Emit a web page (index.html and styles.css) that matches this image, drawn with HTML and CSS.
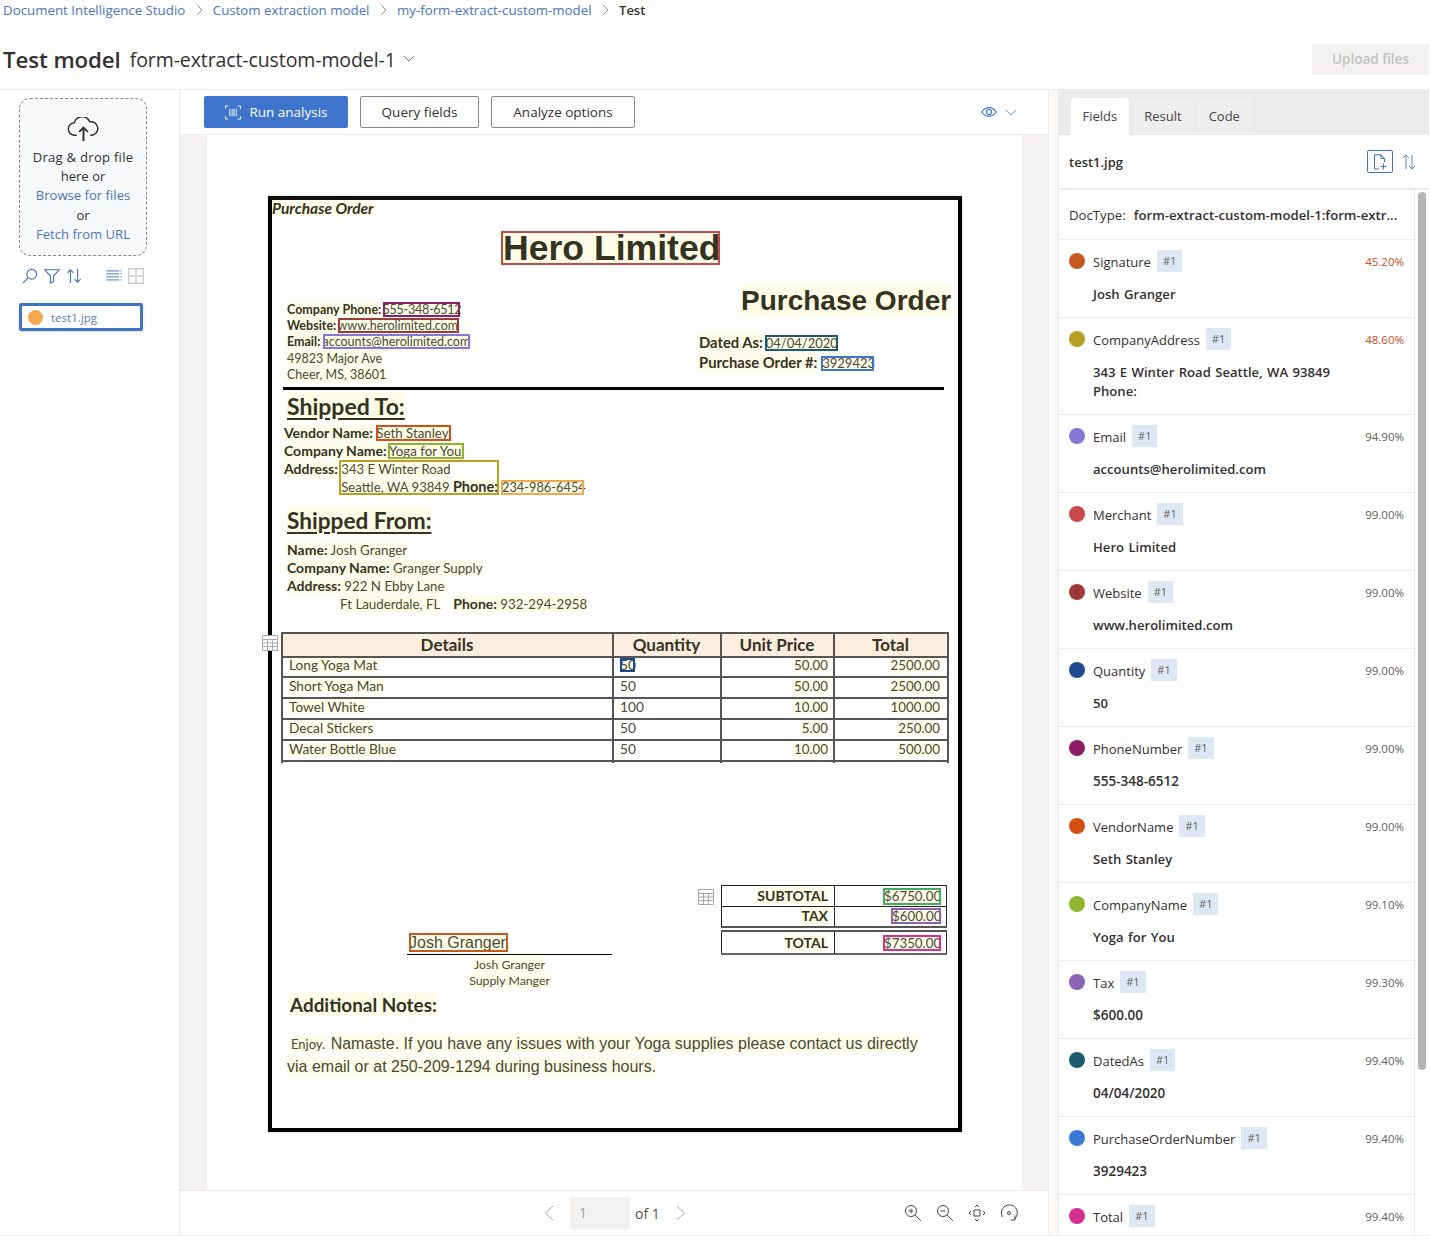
FILE: index.html
```html
<!DOCTYPE html>
<html lang="en">
<head>
  <meta charset="UTF-8">
  <title>Test model</title>
  <link rel="stylesheet" href="styles.css">
</head>
<body>
  <nav class="crumbs">
    <a>Document Intelligence Studio</a>
    <svg class="crumb-sep" viewBox="0 0 8 14"><path d="M1 1l6 6-6 6"/></svg>
    <a>Custom extraction model</a>
    <svg class="crumb-sep" viewBox="0 0 8 14"><path d="M1 1l6 6-6 6"/></svg>
    <a>my-form-extract-custom-model</a>
    <svg class="crumb-sep" viewBox="0 0 8 14"><path d="M1 1l6 6-6 6"/></svg>
    <span class="crumb-now">Test</span>
  </nav>

  <header class="title-row">
    <h1>Test model</h1>
    <span class="model-name">form-extract-custom-model-1</span>
    <svg class="title-chevron" viewBox="0 0 14 8"><path d="M1 1l6 6 6-6"/></svg>
    <button class="btn-upload">Upload files</button>
  </header>

  <main class="workspace">
    <aside class="sidebar">
      <div class="dropzone">
        <svg class="cloud" viewBox="0 0 34 26"><path d="M10 19H8a6.5 6.5 0 0 1-.6-13A8.5 8.5 0 0 1 23.5 5a7 7 0 0 1 2.5 14h-2"/><path class="cloud-arrow" d="M17 25V11M12.500 15.500L17 11l4.500 4.500"/></svg>
        <p class="drop-first">Drag &amp; drop file</p>
        <p>here or</p>
        <p><a>Browse for files</a></p>
        <p>or</p>
        <p><a>Fetch from URL</a></p>
      </div>
      <div class="side-tools">
        <svg class="tool" viewBox="0 0 18 18"><circle cx="11" cy="7" r="5.500"/><path d="M7 11l-6 6"/></svg>
        <svg class="tool" viewBox="0 0 18 18"><path d="M1 2h16l-6.200 7v6l-3.600 2V9z"/></svg>
        <svg class="tool" viewBox="0 0 18 18"><path d="M5 17V2M1.500 5.500L5 2l3.500 3.500M13 1v15M9.500 12.500L13 16l3.500-3.500"/></svg>
        <svg class="tool tool-list" viewBox="0 0 18 14"><path d="M0 1h15M0 4.500h15M0 8h15M0 11.500h15M16.500 1h1.500M16.500 4.500h1.500M16.500 8h1.500M16.500 11.500h1.500"/></svg>
        <svg class="tool tool-grid" viewBox="0 0 16 16"><path d="M.75.75h14.500v14.500H.75zM8 .75v14.500M.75 8h14.500"/></svg>
      </div>
      <div class="file-card"><span class="file-dot"></span>test1.jpg</div>
    </aside>

    <section class="viewer">
      <div class="toolbar">
        <button class="btn btn-run">
          <svg class="scan" viewBox="0 0 18 16"><path d="M1 4V1h3M14 1h3v3M17 12v3h-3M4 15H1v-3M5.500 4v8M8 4v8M10 4v8M12.500 4v8"/></svg>
          Run analysis
        </button>
        <button class="btn">Query fields</button>
        <button class="btn">Analyze options</button>
        <svg class="eye" viewBox="0 0 16 10"><path d="M.7 5C3 1.800 5.400.7 8 .7s5 1.100 7.300 4.300C13 8.200 10.600 9.300 8 9.300S3 8.200.7 5z"/><circle cx="8" cy="5" r="2.500"/></svg>
        <svg class="eye-chevron" viewBox="0 0 14 8"><path d="M1 1l6 6 6-6"/></svg>
      </div>

      <div class="canvas">
        <div class="paper">
          <article class="doc">
            <p class="doc-kicker"><mark>Purchase Order</mark></p>
            <h2 class="doc-name"><mark class="box b-merchant">Hero Limited</mark></h2>

            <div class="doc-head">
              <div class="doc-contact">
                <p><mark><b>Company Phone:</b></mark> <mark class="box b-phone">555-348-6512</mark></p>
                <p><mark><b>Website:</b></mark> <mark class="box b-site">www.herolimited.com</mark></p>
                <p><mark><b>Email:</b></mark> <mark class="box b-mail">accounts@herolimited.com</mark></p>
                <p><mark>49823 Major Ave</mark></p>
                <p><mark>Cheer, MS, 38601</mark></p>
              </div>
              <div class="doc-order">
                <h3><mark>Purchase Order</mark></h3>
                <p><mark><b>Dated As:</b></mark> <mark class="box b-date">04/04/2020</mark></p>
                <p><mark><b>Purchase Order #:</b></mark> <mark class="box b-po">3929423</mark></p>
              </div>
            </div>
            <div class="doc-rule"></div>

            <div class="doc-block doc-to">
              <h3><mark>Shipped To:</mark></h3>
              <p><mark><b>Vendor Name:</b></mark> <mark class="box b-vendor">Seth Stanley</mark></p>
              <p><mark><b>Company Name:</b></mark> <mark class="box b-company">Yoga for You</mark></p>
              <p class="address-line"><mark><b>Address:</b></mark> <span class="box b-address"><mark>343 E Winter Road</mark><br><mark>Seattle, WA 93849</mark> <mark><b>Phone:</b></mark></span></p>
              <p class="phone-line"><mark class="box b-phone2">234-986-6454</mark></p>
            </div>

            <div class="doc-block doc-from">
              <h3><mark>Shipped From:</mark></h3>
              <p><mark><b>Name:</b> Josh Granger</mark></p>
              <p><mark><b>Company Name:</b> Granger Supply</mark></p>
              <p><mark><b>Address:</b> 922 N Ebby Lane</mark></p>
              <p class="from-city"><mark>Ft Lauderdale, FL</mark> <mark class="from-phone"><b>Phone:</b> 932-294-2958</mark></p>
            </div>

            <div class="items-wrap">
              <svg class="table-mark mark-items" viewBox="0 0 16 16"><path d="M.5.500h15v15H.5zM.5 4.500h15M.5 8h15M.5 11.500h15M5.500 4.500v11M10.500 4.500v11"/></svg>
              <table class="items">
                <colgroup><col class="c-details"><col class="c-qty"><col class="c-price"><col class="c-total"></colgroup>
                <thead>
                  <tr><th>Details</th><th>Quantity</th><th>Unit Price</th><th>Total</th></tr>
                </thead>
                <tbody>
                  <tr class="first"><td><mark>Long Yoga Mat</mark></td><td><mark class="box b-qty">50</mark></td><td class="num"><mark>50.00</mark></td><td class="num"><mark>2500.00</mark></td></tr>
                  <tr><td><mark>Short Yoga Man</mark></td><td>50</td><td class="num"><mark>50.00</mark></td><td class="num"><mark>2500.00</mark></td></tr>
                  <tr><td><mark>Towel White</mark></td><td>100</td><td class="num"><mark>10.00</mark></td><td class="num"><mark>1000.00</mark></td></tr>
                  <tr><td><mark>Decal Stickers</mark></td><td>50</td><td class="num"><mark>5.00</mark></td><td class="num"><mark>250.00</mark></td></tr>
                  <tr><td><mark>Water Bottle Blue</mark></td><td>50</td><td class="num"><mark>10.00</mark></td><td class="num"><mark>500.00</mark></td></tr>
                  <tr class="tail"><td></td><td></td><td></td><td></td></tr>
                </tbody>
              </table>
            </div>

            <div class="doc-sign">
              <div class="signature">
                <div class="sign-line"><mark class="box b-sign">Josh Granger</mark></div>
                <p><mark>Josh Granger</mark></p>
                <p><mark>Supply Manger</mark></p>
              </div>
              <div class="totals-wrap">
                <svg class="table-mark mark-totals" viewBox="0 0 16 16"><path d="M.5.500h15v15H.5zM.5 4.500h15M.5 8h15M.5 11.500h15M5.500 4.500v11M10.500 4.500v11"/></svg>
                <table class="totals">
                  <tr><th><mark>SUBTOTAL</mark></th><td><mark class="box b-sub">$6750.00</mark></td></tr>
                  <tr><th><mark>TAX</mark></th><td><mark class="box b-tax">$600.00</mark></td></tr>
                  <tr class="grand"><th><mark>TOTAL</mark></th><td><mark class="box b-grand">$7350.00</mark></td></tr>
                </table>
              </div>
            </div>

            <h3 class="doc-notes-title"><mark>Additional Notes:</mark></h3>
            <p class="doc-notes"><mark class="enjoy">Enjoy.</mark> <mark>Namaste. If you have any issues with your Yoga supplies please contact us directly</mark></p>
            <p class="doc-notes doc-notes-2"><mark>via email or at 250-209-1294 during business hours.</mark></p>
          </article>
        </div>
      </div>

      <div class="pager">
        <svg class="pager-arrow" viewBox="0 0 10 16"><path d="M9 1L1.500 8 9 15"/></svg>
        <span class="page-input">1</span>
        <span class="page-of">of 1</span>
        <svg class="pager-arrow" viewBox="0 0 10 16"><path d="M1 1l7.500 7L1 15"/></svg>
        <div class="zoom-tools">
          <svg viewBox="0 0 18 18"><circle cx="7" cy="7" r="5.500"/><path d="M11 11l6 6M4.500 7h5M7 4.500v5"/></svg>
          <svg viewBox="0 0 18 18"><circle cx="7" cy="7" r="5.500"/><path d="M11 11l6 6M4.500 7h5"/></svg>
          <svg viewBox="0 0 18 18"><path d="M6 6h6v6H6zM7 3l2-2 2 2M7 15l2 2 2-2M3 7L1 9l2 2M15 7l2 2-2 2"/></svg>
          <svg viewBox="0 0 18 18"><path d="M2.500 13A8 8 0 1 1 14.500 15M15 11.500V16h-4.500"/><circle cx="9" cy="9" r="1.500"/></svg>
        </div>
      </div>
    </section>

    <div class="splitter"></div>

    <section class="panel">
      <div class="tabs">
        <span class="tab tab-on">Fields</span>
        <span class="tab">Result</span>
        <span class="tab">Code</span>
      </div>
      <div class="panel-head">
        <span class="panel-file">test1.jpg</span>
        <span class="add-doc">
          <svg viewBox="0 0 14 16"><path d="M6 15H1.500V.75H8L11.500 4.500V8M8 .75V4.500h3.500M10.500 9.500v6M7.500 12.500h6"/></svg>
        </span>
        <svg class="panel-sort" viewBox="0 0 14 16"><path d="M4 15V1M1 4l3-3 3 3M10 1v14M7 12l3 3 3-3"/></svg>
      </div>
      <div class="panel-body">
        <div class="field-list">
          <div class="doctype"><span>DocType:</span><b>form-extract-custom-model-1:form-extr...</b></div>

          <div class="field">
            <div class="field-top"><i class="dot d-sign"></i><span>Signature</span><em>#1</em><small class="low">45.20%</small></div>
            <p>Josh Granger</p>
          </div>
          <div class="field">
            <div class="field-top"><i class="dot d-address"></i><span>CompanyAddress</span><em>#1</em><small class="low">48.60%</small></div>
            <p>343 E Winter Road Seattle, WA 93849<br>Phone:</p>
          </div>
          <div class="field">
            <div class="field-top"><i class="dot d-mail"></i><span>Email</span><em>#1</em><small>94.90%</small></div>
            <p>accounts@herolimited.com</p>
          </div>
          <div class="field">
            <div class="field-top"><i class="dot d-merchant"></i><span>Merchant</span><em>#1</em><small>99.00%</small></div>
            <p>Hero Limited</p>
          </div>
          <div class="field">
            <div class="field-top"><i class="dot d-site"></i><span>Website</span><em>#1</em><small>99.00%</small></div>
            <p>www.herolimited.com</p>
          </div>
          <div class="field">
            <div class="field-top"><i class="dot d-qty"></i><span>Quantity</span><em>#1</em><small>99.00%</small></div>
            <p>50</p>
          </div>
          <div class="field">
            <div class="field-top"><i class="dot d-phone"></i><span>PhoneNumber</span><em>#1</em><small>99.00%</small></div>
            <p class="digits">555-348-6512</p>
          </div>
          <div class="field">
            <div class="field-top"><i class="dot d-vendor"></i><span>VendorName</span><em>#1</em><small>99.00%</small></div>
            <p>Seth Stanley</p>
          </div>
          <div class="field">
            <div class="field-top"><i class="dot d-company"></i><span>CompanyName</span><em>#1</em><small>99.10%</small></div>
            <p>Yoga for You</p>
          </div>
          <div class="field">
            <div class="field-top"><i class="dot d-tax"></i><span>Tax</span><em>#1</em><small>99.30%</small></div>
            <p class="digits">$600.00</p>
          </div>
          <div class="field">
            <div class="field-top"><i class="dot d-date"></i><span>DatedAs</span><em>#1</em><small>99.40%</small></div>
            <p class="digits">04/04/2020</p>
          </div>
          <div class="field">
            <div class="field-top"><i class="dot d-po"></i><span>PurchaseOrderNumber</span><em>#1</em><small>99.40%</small></div>
            <p class="digits">3929423</p>
          </div>
          <div class="field">
            <div class="field-top"><i class="dot d-total"></i><span>Total</span><em>#1</em><small>99.40%</small></div>
          </div>
        </div>
        <div class="scroll-track"><div class="scroll-thumb"></div></div>
      </div>
    </section>
  </main>
</body>
</html>
```

FILE: styles.css
```css
* {
  box-sizing: border-box;
}

html, body {
  margin: 0;
  padding: 0;
  height: 1246px;
  overflow: hidden;
  background-color: #fff;
  color: #323130;
  font-family: "Open Sans", "Noto Sans", sans-serif;
}

p, h1, h2, h3 {
  margin: 0;
}

button {
  font-family: inherit;
}

svg {
  display: block;
  flex: none;
  fill: none;
  stroke: currentColor;
}

/* breadcrumb + title */
.crumbs {
  display: flex;
  align-items: center;
  height: 20px;
  padding-left: 3px;
  font-size: 13.300px;
  color: #4a76b8;
}

.crumb-sep {
  width: 7px;
  height: 12px;
  margin: 0 10px 0 10.500px;
  color: #7a7a7a;
}

.crumb-now {
  color: #323130;
  font-weight: 600;
  font-size: 13px;
}

.title-row {
  display: flex;
  align-items: center;
  height: 69px;
  padding: 9px 1px 0 3px;
}

.title-row h1 {
  font-size: 22.300px;
  font-weight: 600;
  letter-spacing: -0.1px;
  margin-right: 9px;
}

.model-name {
  font-size: 19.500px;
  letter-spacing: -0.1px;
}

.title-chevron {
  width: 12px;
  height: 7px;
  margin: -2px 0 0 7px;
  color: #605e5c;
}

.btn-upload {
  margin: 0 0 0 auto;
  width: 117px;
  height: 31px;
  border: 0;
  background: #f3f2f1;
  color: #c4c2c0;
  font-size: 13.500px;
  font-weight: 600;
}

/* main area */
.workspace {
  display: flex;
  width: 1429px;
  height: 1147px;
  border-top: 1px solid #edebe9;
  border-bottom: 1px solid #edebe9;
}

.sidebar {
  width: 180px;
  flex: none;
  padding: 8px 32px 0 19px;
  border-right: 1px solid #edebe9;
}

.dropzone {
  width: 128px;
  height: 158px;
  padding-top: 19px;
  border: 1px dashed #8a8886;
  border-radius: 11px;
  background: #f8f9fb;
  text-align: center;
  font-size: 13.100px;
  line-height: 19.200px;
}

.drop-first {
  letter-spacing: 0.25px;
}

.dropzone a {
  color: #4a76b8;
}

.cloud {
  width: 33px;
  height: 25px;
  margin: -1px auto 6px;
  stroke-width: 1.500;
  color: #323130;
}

.cloud-arrow {
  stroke-width: 2;
}

.side-tools {
  display: flex;
  align-items: center;
  gap: 6px;
  height: 18px;
  margin: 11px 0 0 3px;
  color: #4a76b8;
}

.tool {
  width: 16px;
  height: 16px;
  stroke-width: 1.300;
}

.tool-list {
  width: 18px;
  height: 12px;
  margin-left: 17px;
  color: #6d93cc;
}

.tool-grid {
  margin-left: -1px;
  color: #cfcfcf;
  stroke-width: 1.500;
}

.file-card {
  display: flex;
  align-items: center;
  width: 124px;
  height: 28px;
  margin-top: 18px;
  padding-left: 6px;
  border: 3px solid #3e74c1;
  border-radius: 2px;
  font-size: 11.500px;
  color: #5b7ea8;
  box-shadow: 0 1px 3px rgba(0, 0, 0, 0.15);
}

.file-dot {
  width: 15px;
  height: 15px;
  margin-right: 8px;
  border-radius: 50%;
  background: #f2a94f;
}

.viewer {
  width: 869px;
  flex: none;
  display: flex;
  flex-direction: column;
  border-right: 1px solid #edebe9;
}

.toolbar {
  display: flex;
  align-items: center;
  height: 45px;
  padding: 0 31px 0 24px;
  gap: 12px;
  border-bottom: 1px solid #edebe9;
}

.btn {
  display: flex;
  align-items: center;
  justify-content: center;
  height: 32px;
  width: 119px;
  border: 1px solid #8a8886;
  border-radius: 2px;
  background: #fff;
  color: #323130;
  font-size: 13.500px;
  font-weight: 500;
}

.btn:nth-child(3) {
  width: 144px;
}

.btn-run {
  width: 144px;
  border: 0;
  background: #3e74cc;
  color: #fff;
}

.scan {
  width: 18px;
  height: 15px;
  margin-right: 7px;
  stroke-width: 1;
}

.eye {
  width: 16px;
  height: 10px;
  margin-left: auto;
  color: #3e74cc;
  stroke-width: 1.200;
}

.eye-chevron {
  width: 12px;
  height: 7px;
  margin-left: -4px;
  color: #5e89cf;
}

.canvas {
  flex: 1;
  padding: 0 26px 0 27px;
  background: #f3f2f1;
  min-height: 0;
}

.paper {
  height: 100%;
  padding: 61px 0 0 61px;
  background: #fff;
}

.pager {
  display: flex;
  align-items: center;
  height: 45px;
  padding-left: 364px;
  border-top: 1px solid #edebe9;
  font-size: 14px;
  color: #55534f;
}

.pager-arrow {
  width: 10px;
  height: 16px;
  color: #a8a6a4;
}

.page-input {
  width: 60px;
  height: 32px;
  margin: 0 5px 0 16px;
  padding-left: 9px;
  border-radius: 2px;
  background: #f3f2f1;
  color: #a19f9d;
  line-height: 32px;
}

.page-of {
  margin-right: 16px;
}

.zoom-tools {
  display: flex;
  gap: 14px;
  margin-left: 218px;
  color: #484644;
}

.zoom-tools svg {
  width: 18px;
  height: 18px;
}

/* the scanned page */
.doc {
  width: 694px;
  height: 936px;
  padding-top: 1px;
  border: 4px solid #000;
  border-top-color: #111;
  color: #4a4a35;
  font-family: Lato, "Open Sans", sans-serif;
  box-shadow: 0 0 1px #777;
}

.doc mark {
  background: #fffde8;
  color: inherit;
}

.doc b, .doc h2, .doc h3, .doc th {
  font-weight: 700;
  color: #33331f;
}

.box {
  display: inline-block;
  position: relative;
  white-space: nowrap;
  outline: 2px solid;
  outline-offset: -2px;
}

.b-merchant { outline-color: #c04a4a; width: 219px; padding-left: 2px; }
.b-phone { outline-color: #8c1e63; width: 77px; height: 15px; line-height: 15px; margin-left: -2px; letter-spacing: -0.25px; }
.b-site { outline-color: #9e3a36; width: 121px; height: 15px; line-height: 15px; margin-left: -2px; }
.b-mail { outline-color: #8676d6; width: 147px; height: 15px; line-height: 15px; margin-left: -1px; }
.b-date { outline-color: #1d5a70; width: 73px; height: 16px; line-height: 16px; margin-left: -2px; padding-left: 1px; }
.b-po { outline-color: #3a78d4; width: 53px; height: 15px; line-height: 15px; padding-left: 1px; }
.b-vendor { outline-color: #d44f14; width: 75px; height: 16px; line-height: 16px; }
.b-company { outline-color: #8fb52d; width: 76px; height: 16px; line-height: 16px; margin-left: -2px; padding-left: 1px; }
.b-address { outline-color: #b8a024; width: 160px; height: 35px; line-height: 18px; vertical-align: top; margin-left: -2px; padding-left: 2px; }
.b-phone2 { outline-color: #f0a94c; width: 83px; height: 15px; line-height: 15px; padding-left: 1px; }
.b-qty { outline-color: #1f4a8f; width: 15px; height: 14px; line-height: 14px; }
.b-sign { outline-color: #c55a20; width: 99px; height: 19px; line-height: 19px; }
.b-sub { outline-color: #3fae62; width: 58px; height: 17px; line-height: 16px; text-align: left; padding-left: 1px; }
.b-tax { outline-color: #8b62b5; width: 50px; height: 16px; line-height: 16px; text-align: left; padding-left: 1px; }
.b-grand { outline-color: #d6308f; width: 58px; height: 16px; line-height: 16px; text-align: left; padding-left: 1px; }

.doc-kicker {
  height: 15px;
  font-size: 15.500px;
  line-height: 15px;
  font-style: italic;
  font-weight: 700;
  color: #33331f;
}

.doc-kicker mark {
  display: inline-block;
  height: 15px;
  padding-right: 1px;
}

.doc-name {
  height: 34px;
  margin: 15px 0 0 229px;
  font-family: "Liberation Sans", Arial, sans-serif;
  font-size: 35.600px;
  line-height: 34px;
}

.doc-head {
  display: flex;
  height: 102px;
  margin-top: 20px;
  padding-left: 15px;
}

.doc-contact {
  width: 412px;
  padding-top: 17px;
  font-size: 12.500px;
  line-height: 16.200px;
}

.doc-order {
  font-size: 14.800px;
  line-height: 20px;
}

.doc-order .box {
  font-size: 13px;
}

.doc-order h3 {
  height: 32px;
  margin: 0 0 15px 42px;
  font-family: "Liberation Sans", Arial, sans-serif;
  font-size: 28px;
  line-height: 32px;
  white-space: nowrap;
}

.doc-rule {
  width: 661px;
  height: 3px;
  margin-left: 11px;
  background: #000;
}

.doc-block {
  padding-left: 15px;
  line-height: 18px;
  font-size: 13.300px;
}

.doc-block b {
  font-size: 14px;
}

.doc-block h3 {
  height: 28px;
  font-size: 23px;
  line-height: 26px;
  text-decoration: underline;
  text-underline-offset: 3px;
}

.doc-to {
  position: relative;
  height: 103px;
  margin-top: 3px;
  padding-left: 12px;
}

.doc-to h3 {
  margin: 0 0 3px 3px;
}

.address-line {
  height: 36px;
}

.address-line b {
  font-size: 14px;
}

.address-line .box b {
  font-size: 14.500px;
}

.address-line .box {
  font-size: 13.100px;
  line-height: 18px;
}

.phone-line {
  position: absolute;
  left: 229px;
  top: 85px;
  font-size: 12.800px;
}

.doc-from {
  height: 105px;
  margin-top: 12px;
}

.doc-from h3 {
  font-size: 22.600px;
  margin-bottom: 5px;
}

.from-city {
  padding-left: 53px;
}

.from-phone {
  margin-left: 10px;
}

.items-wrap {
  position: relative;
  margin: 19px 0 0 9px;
  width: 666px;
  height: 130px;
}

.table-mark {
  position: absolute;
  width: 16px;
  height: 16px;
  color: #a9a9a9;
  background: #fff;
}

.mark-items {
  left: -19px;
  top: 3px;
}

.mark-totals {
  left: -23px;
  top: 4px;
}

.items, .totals {
  border-collapse: collapse;
  table-layout: fixed;
  font-size: 13.700px;
}

.items {
  width: 666px;
}

.c-details { width: 331px; }
.c-qty { width: 108px; }
.c-price { width: 113px; }
.c-total { width: 114px; }

.items th, .items td {
  padding: 0 7px 0 6px;
  border: 2px solid #555;
  line-height: 14px;
}

.items td mark {
  display: inline-block;
  height: 14px;
}

.items th {
  height: 24px;
  background: #fdeee0;
  font-size: 17px;
  line-height: 20px;
  text-align: center;
}

.items td {
  height: 21px;
  padding-bottom: 4px;
}

.items .first td {
  height: 20px;
}

.items .num {
  padding-bottom: 4px;
  font-size: 13.300px;
  text-align: right;
}

.items td:nth-child(3) {
  padding-right: 5px;
}

.items .tail td {
  height: 2px;
  padding: 0;
  line-height: 0;
  border-bottom: 0;
}

.doc-sign {
  display: flex;
  height: 104px;
  margin: 123px 0 0 135px;
}

.signature {
  width: 205px;
  margin-right: 109px;
  padding-top: 48px;
  text-align: center;
  font-size: 12.300px;
  line-height: 16px;
}

.sign-line {
  height: 22px;
  margin-bottom: 2px;
  padding-left: 2px;
  border-bottom: 1px solid #000;
  text-align: left;
  font-family: "Liberation Sans", Arial, sans-serif;
  font-size: 16px;
}

.totals-wrap {
  position: relative;
}

.totals {
  width: 225px;
  height: 68px;
}

.totals th, .totals td {
  width: 113px;
  height: 21px;
  padding: 0 6px;
  border: 1px solid #222;
  text-align: right;
  font-size: 14px;
  line-height: 18px;
}

.totals tr:nth-child(2) th, .totals tr:nth-child(2) td {
  height: 22px;
}

.totals td {
  width: 112px;
  padding: 0 5px 0 0;
  font-size: 13.300px;
}

.totals .grand th, .totals .grand td {
  height: 25px;
  padding-top: 1px;
  border-top: 6px double #555;
  border-bottom: 2px solid #666;
}

.doc-notes-title {
  height: 24px;
  margin: 4px 0 0 18px;
  font-size: 18.900px;
  line-height: 24px;
}

.doc-notes {
  margin: 15px 0 0 19px;
  height: 23px;
  font-family: "Liberation Sans", Arial, sans-serif;
  font-size: 16px;
  line-height: 23px;
  white-space: nowrap;
}

.doc-notes-2 {
  margin: 0 0 0 15px;
}

.enjoy {
  margin-right: 1px;
  font-family: Lato, sans-serif;
  font-size: 13px;
}

.splitter {
  width: 9px;
  flex: none;
  background: #faf9f8;
}

/* right panel */
.panel {
  width: 371px;
  flex: none;
  display: flex;
  flex-direction: column;
}

.tabs {
  display: flex;
  gap: 4px;
  height: 45px;
  padding: 8px 0 0 13px;
  background: #ebebeb;
}

.tab {
  padding: 0 11.500px;
  height: 37px;
  background: #eeeeee;
  border-radius: 3px 3px 0 0;
  font-size: 13px;
  line-height: 36px;
  color: #484644;
}

.tab-on {
  background: #fff;
}

.panel-head {
  display: flex;
  align-items: center;
  height: 55px;
  padding: 0 13px 0 10px;
  border-left: 1px solid #edebe9;
  border-bottom: 2px solid #edebe9;
}

.panel-file {
  font-size: 13px;
  font-weight: 600;
  margin-right: auto;
}

.add-doc {
  display: flex;
  align-items: center;
  justify-content: center;
  width: 26px;
  height: 23px;
  margin-right: 9px;
  border: 1px solid #3e74c1;
  border-radius: 2px;
  color: #3e74c1;
}

.add-doc svg {
  width: 14px;
  height: 16px;
}

.panel-sort {
  width: 14px;
  height: 16px;
  color: #5e89cf;
}

.panel-body {
  flex: 1;
  display: flex;
  min-height: 0;
}

.field-list {
  flex: 1;
  overflow: hidden;
  border-left: 1px solid #edebe9;
  border-right: 1px solid #edebe9;
}

.doctype {
  display: flex;
  height: 50px;
  padding-left: 10px;
  gap: 8px;
  align-items: center;
  border-bottom: 1px solid #edebe9;
  font-size: 13.200px;
  white-space: nowrap;
}

.doctype b {
  font-weight: 600;
}

.field {
  padding: 10px 10px 13px;
  border-bottom: 1px solid #edebe9;
}

.field-top {
  display: flex;
  align-items: center;
  height: 22px;
  font-size: 13px;
}

.field-top span {
  margin-top: 2px;
}

.dot {
  width: 16px;
  height: 16px;
  margin-right: 8px;
  border-radius: 50%;
}

.d-sign { background: #c55a20; }
.d-address { background: #b8a024; }
.d-mail { background: #8676d6; }
.d-merchant { background: #c9484a; }
.d-site { background: #9e3a36; }
.d-qty { background: #1f4a8f; }
.d-phone { background: #8c1e63; }
.d-vendor { background: #d44f14; }
.d-company { background: #8fb52d; }
.d-tax { background: #8b62b5; }
.d-date { background: #1d5a70; }
.d-po { background: #3a78d4; }
.d-total { background: #d6308f; }

.field-top em {
  height: 22px;
  margin-left: 6px;
  padding: 0 6px;
  background: #dee8f5;
  font-size: 11px;
  font-style: normal;
  line-height: 22px;
  color: #605e5c;
}

.field-top small {
  margin-left: auto;
  font-size: 11.500px;
  color: #605e5c;
}

.field-top .low {
  color: #c4501c;
}

.field p {
  margin: 13px 0 0 24px;
  font-size: 13.100px;
  font-weight: 600;
  line-height: 19px;
  word-spacing: 1px;
}

.field .digits {
  font-size: 13.500px;
}

.scroll-track {
  width: 14px;
  flex: none;
  padding: 2px 3px 0;
  background: #fff;
}

.scroll-thumb {
  height: 878px;
  border-radius: 4px;
  background: #b4b4b4;
}
```
